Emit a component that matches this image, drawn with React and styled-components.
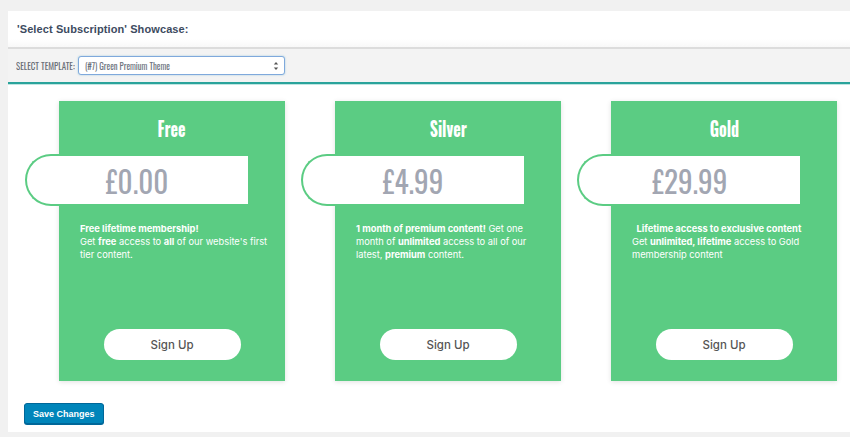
import React from 'react';
import styled, { createGlobalStyle } from 'styled-components';

const GREEN = '#5bcc83';
const NARROW = `"Oswald", "DejaVu Sans Condensed", "Liberation Sans Narrow", "Roboto", sans-serif`;

const plans = [
  {
    id: 'free',
    name: 'Free',
    price: '£0.00',
    body: (
      <>
        <b>Free lifetime membership!</b>
        <br />
        Get <b>free</b> access to <b>all</b> of our website's first tier content.
      </>
    ),
  },
  {
    id: 'silver',
    name: 'Silver',
    price: '£4.99',
    body: (
      <>
        <b>1 month of premium content!</b> Get one month of <b>unlimited</b> access to all of our latest, <b>premium</b> content.
      </>
    ),
  },
  {
    id: 'gold',
    name: 'Gold',
    price: '£29.99',
    body: (
      <>
        <b>&nbsp;&nbsp;Lifetime access to exclusive content</b>
        <br />
        Get <b>unlimited, lifetime</b> access to Gold membership content
      </>
    ),
  },
];

const App = () => {
  return (
    <>
      <GlobalStyle />
      <Page>
        <Panel>
          <Header>
            <Title>'Select Subscription' Showcase:</Title>
          </Header>
          <Toolbar>
            <Label>Select Template:</Label>
            <SelectBox>
              <span>(#7) Green Premium Theme</span>
              <Arrows viewBox="0 0 6 10">
                <path d="M3 1 L5.2 3.6 H0.8 Z" fill="#555" />
                <path d="M3 9 L5.2 6.4 H0.8 Z" fill="#555" />
              </Arrows>
            </SelectBox>
          </Toolbar>
          <Content>
            <Cards>
              {plans.map(plan => (
                <Card key={plan.id}>
                  <PlanName>{plan.name}</PlanName>
                  <PriceBar>
                    <Price>{plan.price}</Price>
                  </PriceBar>
                  <Description>{plan.body}</Description>
                  <SignUp>Sign Up</SignUp>
                </Card>
              ))}
            </Cards>
            <SaveButton>Save Changes</SaveButton>
          </Content>
        </Panel>
      </Page>
    </>
  );
};

export default App;

const GlobalStyle = createGlobalStyle`
  html, body {
    margin: 0;
    padding: 0;
    background: #f1f1f1;
    overflow: hidden;
  }
  body {
    font-family: "Inter", "Liberation Sans", sans-serif;
  }
`;

const Page = styled.div`
  width: 850px;
  height: 437px;
  padding: 11px 0 0 8px;
  box-sizing: border-box;
  overflow: hidden;
`;

const Panel = styled.div`
  background: #fff;
  height: 421px;
  display: flex;
  flex-direction: column;
`;

const Header = styled.div`
  height: 36px;
  display: flex;
  align-items: center;
  padding-left: 9px;
  background: linear-gradient(#fff 0, #fff 28px, #f8f8f8 36px);
  border-bottom: 2px solid #dcdcdc;
`;

const Title = styled.h2`
  margin: 0;
  font-family: "Liberation Sans", Arial, sans-serif;
  font-size: 11px;
  font-weight: 700;
  color: #3d4b5f;
  letter-spacing: 0.1px;
`;

const Toolbar = styled.div`
  height: 33px;
  background: #f3f3f3;
  display: flex;
  align-items: center;
  padding-left: 8px;
  border-bottom: 2px solid #2aa39b;
  box-shadow: 0 1px 0 #bfe6e2;
`;

const Label = styled.span`
  font-family: ${NARROW};
  font-stretch: condensed;
  font-size: 10px;
  text-transform: uppercase;
  color: #6b6f78;
  white-space: nowrap;
  width: 62px;
  display: inline-block;
  transform: scaleX(0.88);
  transform-origin: left center;
`;

const SelectBox = styled.div`
  width: 207px;
  height: 19px;
  box-sizing: border-box;
  border: 1px solid #7fa9dc;
  border-radius: 3px;
  background: #fff;
  display: flex;
  align-items: center;
  justify-content: space-between;
  padding: 0 5px 0 6px;
  box-shadow: 0 0 2px rgba(30, 140, 190, 0.4);

  span {
    font-family: ${NARROW};
    font-stretch: condensed;
    font-size: 10px;
    color: #6e7480;
    transform: scaleX(0.86);
    transform-origin: left center;
    white-space: nowrap;
  }
`;

const Arrows = styled.svg`
  width: 6px;
  height: 10px;
`;

const Content = styled.div`
  flex: 1;
  padding: 17px 0 0 16px;
  display: flex;
  flex-direction: column;
`;

const Cards = styled.div`
  display: flex;
  gap: 50px;
  padding-left: 35px;
`;

const Card = styled.div`
  flex: 0 0 226px;
  height: 280px;
  box-sizing: border-box;
  background: ${GREEN};
  box-shadow: 0 1px 5px rgba(0, 0, 0, 0.12);
  display: flex;
  flex-direction: column;
  align-items: center;
  padding: 14px 0 21px;
`;

const PlanName = styled.div`
  font-family: ${NARROW};
  font-stretch: condensed;
  font-size: 20px;
  font-weight: 700;
  line-height: 26px;
  color: #fff;
  transform: scaleX(0.8);
`;

const PriceBar = styled.div`
  align-self: flex-start;
  margin: 13px 0 0 -34px;
  width: 223px;
  height: 52px;
  box-sizing: border-box;
  background: #fff;
  border: 2px solid ${GREEN};
  border-right: none;
  border-radius: 26px 0 0 26px;
  display: flex;
  align-items: center;
  justify-content: center;
`;

const Price = styled.div`
  font-family: ${NARROW};
  font-stretch: condensed;
  font-size: 31px;
  color: #a2a6b2;
  transform: scaleX(0.94);
`;

const Description = styled.p`
  align-self: stretch;
  margin: 16px 0 0;
  padding: 0 14px 0 21px;
  font-size: 9.3px;
  line-height: 13px;
  color: #fff;

  b {
    font-weight: 700;
  }
`;

const SignUp = styled.button`
  margin-top: auto;
  width: 137px;
  height: 31px;
  border: none;
  border-radius: 16px;
  background: #fff;
  font-family: "Inter", "Liberation Sans", sans-serif;
  font-size: 11.5px;
  font-weight: 500;
  color: #555;
  cursor: pointer;
`;

const SaveButton = styled.button`
  align-self: flex-start;
  margin-top: 22px;
  height: 21px;
  padding: 0 8px;
  background: #0085ba;
  border: 1px solid #006799;
  border-radius: 3px;
  box-shadow: 0 1px 0 #006799;
  color: #fff;
  font-family: "Liberation Sans", Arial, sans-serif;
  font-size: 9px;
  font-weight: 700;
  cursor: pointer;
`;
